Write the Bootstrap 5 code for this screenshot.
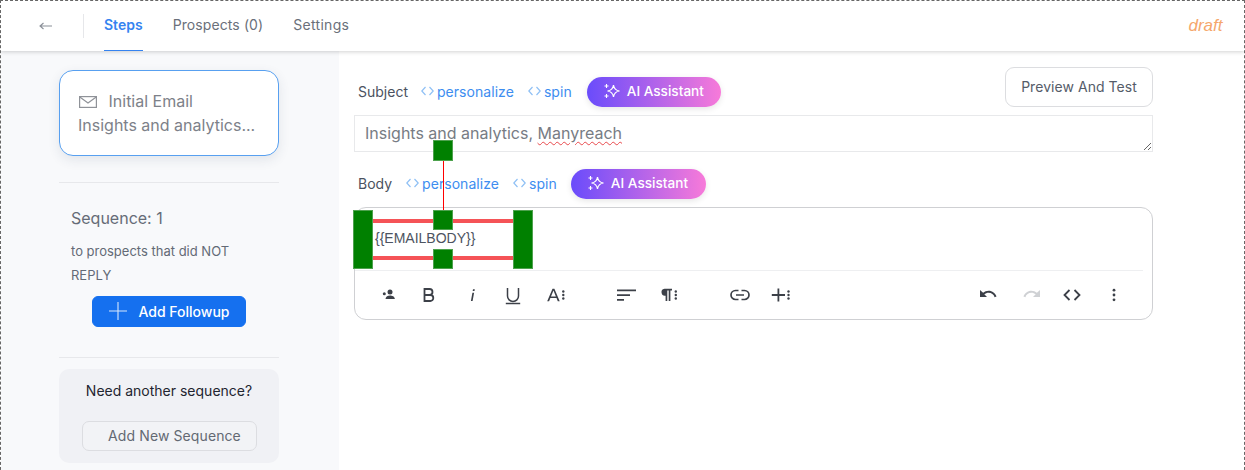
<!DOCTYPE html>
<html lang="en">
<head>
<meta charset="utf-8">
<title>Sequence</title>
<link href="https://cdn.jsdelivr.net/npm/bootstrap@5.3.0/dist/css/bootstrap.min.css" rel="stylesheet">
<style>
html,body{height:470px;overflow:hidden}
body{font-family:Inter,"Liberation Sans",sans-serif;background:#fff;color:#5f6672}
.frame{height:480px;border:1px dashed #666;display:flex;flex-direction:column;overflow:hidden}
.topbar{height:50px;flex:none;background:#fff;box-shadow:0 1px 4px rgba(0,0,0,.18);position:relative;z-index:2;padding-left:38px;padding-right:21px}
.backbtn{width:13px;color:#8a8f98;line-height:0}
.vrule{width:1px;height:24px;background:#e6e7ea;margin:0 20px 0 31px}
.tabitem{font-size:14px;height:49px;line-height:46px;margin-right:30px;color:#6a707a;text-decoration:none;letter-spacing:.1px}
.tabitem.on{color:#3583f0;font-weight:600;border-bottom:1.5px solid #3583f0;letter-spacing:0}
.draftflag{font-style:italic;color:#f5a76c;font-family:"Liberation Sans",sans-serif;font-size:17px;margin-top:-1px;margin-right:.5px}
.workarea{flex:1;min-height:0}
.sidepane{width:338px;flex:none;background:#f8f9fb;padding:19px 60px 0 58px}
.stepbox{height:86px;background:#fff;border:1.5px solid #58a0f0;border-radius:14px;box-shadow:0 4px 12px rgba(40,60,90,.1);padding:18px 18px;font-size:16px;color:#7d8189;line-height:24px;white-space:nowrap}
.stepbox svg{margin:0 7px 0 1px;vertical-align:-1px}
.sep{height:1px;background:#e7e8eb;margin:0}
.seqblock{padding:0 12px}
.seqtitle{font-size:16px;line-height:24px;margin-top:23px;color:#666c77}
.seqnote{font-size:13px;line-height:24px;margin-top:9px;color:#636a76;width:165px}
.followbtn{--bs-btn-bg:#1570ef;--bs-btn-border-color:#1570ef;--bs-btn-hover-bg:#1570ef;--bs-btn-color:#fff;width:154px;height:31px;font-size:14px;padding:0 0 1px 1px;margin:9px 0 30px 21px;border-radius:6px;display:flex;align-items:center;justify-content:center;gap:11px;font-weight:500}
.needbox{height:94px;margin-top:11px;background:#f0f1f5;border-radius:10px;padding-top:13px;text-align:center;font-size:14px;color:#1f2530;line-height:18px}
.seqadd{--bs-btn-color:#636973;--bs-btn-border-color:#dcdde1;--bs-btn-hover-color:#636973;width:175px;height:30px;padding:0 0 0 11px;margin:21px 0 0;font-size:14px;line-height:28px;border-radius:7px;background:#f2f3f6;letter-spacing:.1px}
.mainpane{padding:26px 0 0 15px;width:814px}
.fieldhead{height:30px;padding-left:4px;font-size:13px;gap:0;position:relative}
.fieldhead .lbl{color:#4b5260;font-size:14px;padding-bottom:2px}
.tokenlink{color:#3d8df0;font-size:14px;letter-spacing:.05px;text-decoration:none;display:inline-flex;align-items:center;gap:3px;padding-bottom:2px}
.aibtn{height:30px;width:134px;border:0;border-radius:15px;background:linear-gradient(90deg,#6a4cfb 0%,#f77ad9 100%);color:#fff;font-size:13.6px;font-weight:500;display:flex;align-items:center;gap:6px;padding:0 0 2px 16px;box-shadow:0 2px 6px rgba(0,0,0,.1)}
.previewbtn{--bs-btn-color:#555c69;--bs-btn-border-color:#dcdde0;--bs-btn-hover-color:#555c69;position:absolute;right:0;top:-10px;width:148px;height:40px;font-size:14px;border-radius:9px;padding:0 0 2px;letter-spacing:.05px;background:#fff}
.subjectinput{height:37px;border:1.5px solid #e8e9eb;border-radius:0;margin-top:8px;padding:5px 10px;font-size:16px;color:#777c84;resize:both;overflow:hidden;line-height:24px;box-shadow:none}
.subjectinput span{text-decoration:underline wavy #e8494c 1.2px;text-underline-offset:2px}
.bodyhead{margin-top:17px}
.editorshell{height:113px;margin-top:8px;border:1px solid #cfd0d3;border-radius:12px;position:relative}
.imgwrap{height:62px;padding:20px 0 0 20px;font-family:"Liberation Sans",sans-serif;font-size:14px;line-height:20px;color:#4d5461}
.toolsrow{border-top:1px solid #eeeff1;margin-right:9px;height:49px;position:relative;color:#3c4048}
.toolsrow svg{position:absolute;top:16px}
.toolsrow svg:not([fill=none]){fill:currentColor}
.handle{position:absolute;background:#008000;border:1px solid #4ea24e}
.redline{position:absolute;background:#f55357;height:4px;left:18px;width:141px}
.stem{position:absolute;left:88px;top:-47px;width:1px;height:50px;background:#f00}
</style>
</head>
<body>
<div class="frame">
  <header class="topbar d-flex align-items-center">
    <span class="backbtn"><svg width="13" height="10" viewBox="0 0 13 10" fill="none" stroke="currentColor" stroke-width="1.100"><path d="M13 5H1M4.500 2 1 5l3.500 3"/></svg></span>
    <span class="vrule"></span>
    <a class="tabitem on" href="#">Steps</a>
    <a class="tabitem" href="#">Prospects (0)</a>
    <a class="tabitem" href="#" style="letter-spacing:.3px">Settings</a>
    <span class="draftflag ms-auto">draft</span>
  </header>
  <div class="workarea d-flex">
    <aside class="sidepane">
      <div class="stepbox">
        <svg width="18" height="12" viewBox="0 0 18 12" fill="none" stroke="#8f9298" stroke-width="1.200"><rect x=".6" y=".6" width="16.800" height="10.800"/><path d="M.8 1l8.200 6 8.200-6"/></svg> Initial Email<br>Insights and analytics...
      </div>
      <div class="sep" style="margin-top:26px"></div>
      <div class="seqblock">
        <div class="seqtitle">Sequence: 1</div>
        <div class="seqnote">to prospects that did NOT REPLY</div>
        <button class="btn followbtn" type="button"><svg width="18" height="18" viewBox="0 0 18 18" stroke="#d6e6fc" stroke-width="1.100"><path d="M9 0v18M0 9h18"/></svg>Add Followup</button>
      </div>
      <div class="sep"></div>
      <div class="needbox">Need another sequence?
        <button class="btn seqadd" type="button">Add New Sequence</button>
      </div>
    </aside>
    <main class="mainpane">
      <div class="fieldhead d-flex align-items-center">
        <span class="lbl" style="margin-right:13px">Subject</span>
        <a class="tokenlink" href="#" style="margin-right:14px"><svg width="13" height="10" viewBox="0 0 13 10" fill="none" stroke="#8fc0f5" stroke-width="1.200"><path d="M4.500 1 .8 5l3.700 4M8.500 1l3.700 4-3.700 4"/></svg>personalize</a>
        <a class="tokenlink" href="#" style="margin-right:15px"><svg width="13" height="10" viewBox="0 0 13 10" fill="none" stroke="#8fc0f5" stroke-width="1.200"><path d="M4.500 1 .8 5l3.700 4M8.500 1l3.700 4-3.700 4"/></svg>spin</a>
        <button class="aibtn" type="button"><svg width="18" height="16" viewBox="0 0 18 16" fill="none" stroke="#fff" stroke-width="1.200"><path d="M10.500 2c.5 3.500 2 5.500 6 6-4 .5-5.500 2.500-6 6-.5-3.500-2-5.500-6-6 4-.5 5.500-2.500 6-6z"/><path d="M3.500 1v4M1.500 3h4M3.500 11v4M1.500 13h4" stroke-width="1.100"/></svg>AI Assistant</button>
        <button class="btn previewbtn" type="button">Preview And Test</button>
      </div>
      <div class="form-control subjectinput">Insights and analytics, <span>Manyreach</span></div>
      <div class="fieldhead bodyhead d-flex align-items-center">
        <span class="lbl" style="margin-right:14px">Body</span>
        <a class="tokenlink" href="#" style="margin-right:14px"><svg width="13" height="10" viewBox="0 0 13 10" fill="none" stroke="#8fc0f5" stroke-width="1.200"><path d="M4.500 1 .8 5l3.700 4M8.500 1l3.700 4-3.700 4"/></svg>personalize</a>
        <a class="tokenlink" href="#" style="margin-right:14px"><svg width="13" height="10" viewBox="0 0 13 10" fill="none" stroke="#8fc0f5" stroke-width="1.200"><path d="M4.500 1 .8 5l3.700 4M8.500 1l3.700 4-3.700 4"/></svg>spin</a>
        <button class="aibtn" type="button" style="width:135px"><svg width="18" height="16" viewBox="0 0 18 16" fill="none" stroke="#fff" stroke-width="1.200"><path d="M10.500 2c.5 3.500 2 5.500 6 6-4 .5-5.500 2.500-6 6-.5-3.500-2-5.500-6-6 4-.5 5.500-2.500 6-6z"/><path d="M3.500 1v4M1.500 3h4M3.500 11v4M1.500 13h4" stroke-width="1.100"/></svg>AI Assistant</button>
      </div>
      <div class="editorshell">
        <div class="imgwrap">{{EMAILBODY}}</div>
        <span class="redline" style="top:11px"></span>
        <span class="redline" style="top:48px"></span>
        <span class="stem"></span>
        <span class="handle" style="left:78px;top:-68px;width:20px;height:21px"></span>
        <span class="handle" style="left:-2px;top:2px;width:20px;height:59px"></span>
        <span class="handle" style="left:78px;top:2px;width:20px;height:20px"></span>
        <span class="handle" style="left:78px;top:41px;width:20px;height:20px"></span>
        <span class="handle" style="left:158px;top:2px;width:20px;height:59px"></span>
        <div class="toolsrow">
          <svg style="left:26px" width="16" height="16" viewBox="0 0 16 16"><circle cx="9" cy="5" r="2.500"/><path d="M4.500 12c0-2.400 2.500-3.500 4.500-3.500s4.800 1.100 4.800 3.500z"/><circle cx="3.300" cy="6.800" r="1.500"/></svg>
          <svg style="left:66px" width="16" height="16" viewBox="0 0 16 16" fill="none" stroke="#3c4048" stroke-width="1.800"><path d="M3.500 2h5a3 3 0 0 1 0 6h-5zM3.500 8h5.800a3 3 0 0 1 0 6H3.500z"/></svg>
          <svg style="left:109px" width="16" height="16" viewBox="0 0 16 16"><path d="M9 2.200h1.800l-.3 1.800H8.700zM8.400 5.800h1.700L8.600 14H6.900z"/></svg>
          <svg style="left:150px" width="16" height="18" viewBox="0 0 16 18" fill="none" stroke="#3c4048" stroke-width="1.500"><path d="M2.500 1v8a5.500 5.500 0 0 0 11 0V1"/><path d="M.8 16.500h14.400"/></svg>
          <svg style="left:192px" width="20" height="16" viewBox="0 0 20 16"><path d="M5.500 1.800h1.900l5.300 12.400h-1.900L9.500 11H3.400l-1.300 3.200H.2zM4 9.400h4.900L6.450 3.500z"/><circle cx="16.300" cy="4.500" r="1.200"/><circle cx="16.300" cy="8" r="1.200"/><circle cx="16.300" cy="11.500" r="1.200"/></svg>
          <svg style="left:262px" width="20" height="16" viewBox="0 0 20 16"><path d="M0 2.500h19v1.800H0zM0 7.300h13v1.800H0zM0 12h7v1.800H0z"/></svg>
          <svg style="left:305px" width="20" height="16" viewBox="0 0 20 16"><path d="M4.500 1.800h7.500v1.700h-1.600V14H8.700V3.500H7.300V14H5.600V8.800a3.500 3.500 0 0 1-1.100-7z"/><circle cx="15.800" cy="4.500" r="1.200"/><circle cx="15.800" cy="8" r="1.200"/><circle cx="15.800" cy="11.500" r="1.200"/></svg>
          <svg style="left:375px" width="20" height="16" viewBox="0 0 20 16" fill="none" stroke="#3c4048" stroke-width="1.700"><path d="M8.500 3.500H5.500a4.500 4.500 0 0 0 0 9h3M11.500 3.500h3a4.500 4.500 0 0 1 0 9h-3M6 8h8"/></svg>
          <svg style="left:416px" width="22" height="16" viewBox="0 0 22 16"><path d="M6.500 1.500h1.800v5.600h5.700v1.800H8.300v5.600H6.500V8.900H.8V7.100h5.700z"/><circle cx="17.500" cy="4.500" r="1.200"/><circle cx="17.500" cy="8" r="1.200"/><circle cx="17.500" cy="11.500" r="1.200"/></svg>
          <svg style="left:624px" width="20" height="16" viewBox="0 0 20 16"><path d="M1 3v7h7L5.300 7.300C6.500 6.400 8 5.800 9.600 5.800c2.800 0 5.200 1.800 6 4.400l1.900-.6C16.400 6.200 13.300 3.800 9.600 3.800c-2.100 0-4 .8-5.500 2z"/></svg>
          <svg style="left:666px;color:#cfd1d4" width="20" height="16" viewBox="0 0 20 16"><path d="M19 3v7h-7l2.700-2.700C13.500 6.400 12 5.800 10.400 5.800c-2.800 0-5.200 1.800-6 4.400l-1.900-.6C3.600 6.200 6.700 3.800 10.400 3.800c2.100 0 4 .8 5.500 2z"/></svg>
          <svg style="left:707px" width="20" height="16" viewBox="0 0 20 16" fill="none" stroke="#3c4048" stroke-width="1.800"><path d="M7.500 3 2.500 8l5 5M12.500 3l5 5-5 5"/></svg>
          <svg style="left:751px" width="16" height="16" viewBox="0 0 16 16"><circle cx="8" cy="3.200" r="1.400"/><circle cx="8" cy="8" r="1.400"/><circle cx="8" cy="12.800" r="1.400"/></svg>
        </div>
      </div>
    </main>
  </div>
</div>
<script src="https://cdn.jsdelivr.net/npm/bootstrap@5.3.0/dist/js/bootstrap.bundle.min.js"></script>
</body>
</html>
